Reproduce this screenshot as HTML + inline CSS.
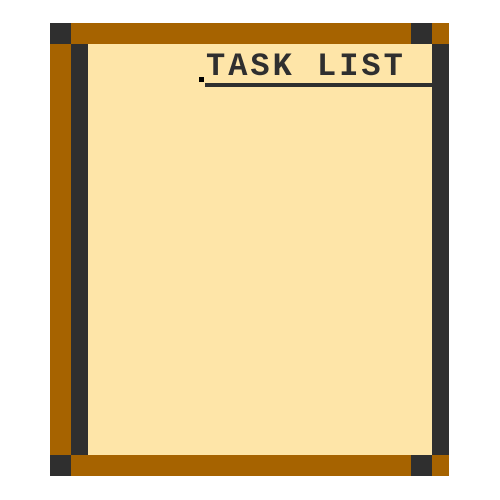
<!DOCTYPE html>
<html><head><style>
body{margin:0;width:500px;height:500px;background:#fff;position:relative;overflow:hidden}
div{position:absolute}
.b{background:#a66300}.d{background:#2f2f2f}
</style></head><body>
<div style="left:71px;top:44px;width:361px;height:411px;background:#fee5a8"></div>
<div class="b" style="left:50px;top:23px;width:399px;height:21px"></div>
<div class="b" style="left:50px;top:455px;width:399px;height:21px"></div>
<div class="b" style="left:50px;top:44px;width:21px;height:411px"></div>
<div class="d" style="left:50px;top:23px;width:21px;height:21px"></div>
<div class="d" style="left:50px;top:455px;width:21px;height:21px"></div>
<div class="d" style="left:411px;top:23px;width:21px;height:21px"></div>
<div class="d" style="left:411px;top:455px;width:21px;height:21px"></div>
<div class="d" style="left:71px;top:44px;width:17px;height:411px"></div>
<div class="d" style="left:432px;top:44px;width:17px;height:411px"></div>
<div style="left:206px;top:50px;font:bold 32px 'Liberation Mono',monospace;letter-spacing:3px;color:#2f2f2f;line-height:34px;white-space:nowrap">TASK LIST</div>
<div class="d" style="left:205px;top:83px;width:227px;height:4px"></div>
<div style="left:199px;top:77px;width:5px;height:5px;background:#000"></div>
</body></html>
